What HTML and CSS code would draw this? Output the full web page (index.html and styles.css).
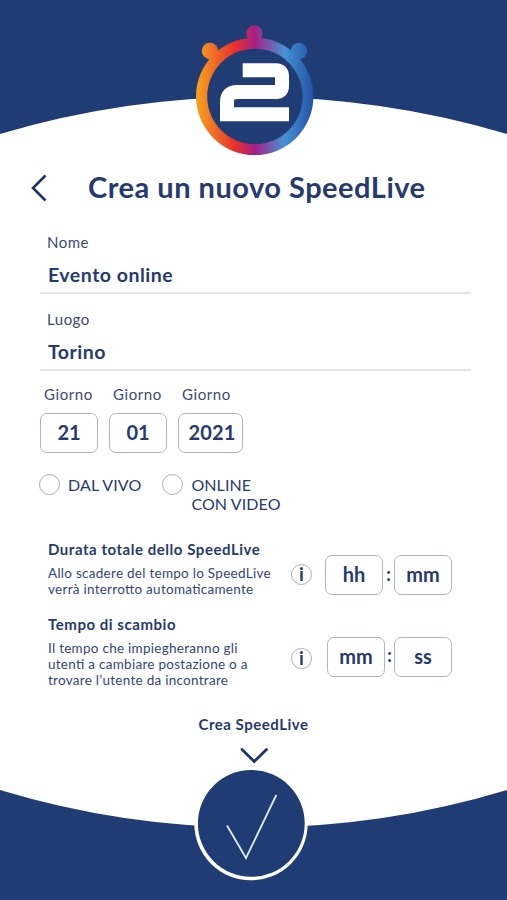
FILE: index.html
```html
<!DOCTYPE html>
<html lang="it">
<head>
<meta charset="utf-8">
<title>Crea un nuovo SpeedLive</title>
<meta name="viewport" content="width=device-width, initial-scale=1">
<link rel="stylesheet" href="styles.css">
</head>
<body>

<svg class="top" viewBox="0 0 507 160" width="507" height="160">
	<defs>
		<linearGradient id="ring" gradientUnits="userSpaceOnUse" x1="196" y1="0" x2="314" y2="0">
			<stop offset="0" stop-color="#f7a51b"/>
			<stop offset=".16" stop-color="#ee6b26"/>
			<stop offset=".33" stop-color="#e9302b"/>
			<stop offset=".5" stop-color="#a61f85"/>
			<stop offset=".75" stop-color="#4593d3"/>
			<stop offset="1" stop-color="#2250a3"/>
		</linearGradient>
	</defs>
	<path class="navy" d="M0 0H507V134A887 887 0 0 0 0 134Z"/>
	<g fill="url(#ring)">
		<circle cx="254.7" cy="96.4" r="58.7"/>
		<circle cx="254.5" cy="33.5" r="8.2"/>
		<circle cx="210" cy="51" r="8.2"/>
		<circle cx="299" cy="51" r="8.2"/>
		<path d="M250 36h9.500v6h-9.500zM207 57l7-6 7 6-7 8zM302 57l-7-6-7 6 7 8z"/>
	</g>
	<circle class="navy" cx="254.900" cy="96.400" r="47.700"/>
	<path class="mark" d="M242.700 70.300H276Q282 70.300 282 76.300V86Q282 92 276 92H237Q227 92 227 102V114.200H289"/>
</svg>

<form class="page">

<div class="title">
	<svg class="back" width="16" height="28" viewBox="0 0 16 28"><path d="M14.500 1.500L2 14L14.500 26.500"/></svg>
	<h1>Crea un nuovo SpeedLive</h1>
</div>

<label class="field">
	<span>Nome</span>
	<input type="text" value="Evento online">
</label>
<label class="field second">
	<span>Luogo</span>
	<input type="text" value="Torino">
</label>

<div class="date">
	<label><span>Giorno</span><input class="box" type="text" value="21"></label>
	<label><span>Giorno</span><input class="box" type="text" value="01"></label>
	<label><span>Giorno</span><input class="box year" type="text" value="2021"></label>
</div>

<div class="modes">
	<label><i class="radio"></i><span>DAL VIVO</span></label>
	<label><i class="radio"></i><span>ONLINE<br>CON VIDEO</span></label>
</div>

<div class="row total">
	<div class="text">
		<h2>Durata totale dello SpeedLive</h2>
		<p>Allo scadere del tempo lo SpeedLive<br>verrà interrotto automaticamente</p>
	</div>
	<b class="info">i</b>
	<div class="time"><span class="box">hh</span><b>:</b><span class="box">mm</span></div>
</div>

<div class="row swap">
	<div class="text">
		<h2>Tempo di scambio</h2>
		<p>Il tempo che impiegheranno gli<br>utenti a cambiare postazione o a<br>trovare l’utente da incontrare</p>
	</div>
	<b class="info">i</b>
	<div class="time"><span class="box">mm</span><b>:</b><span class="box">ss</span></div>
</div>

<div class="create">Crea SpeedLive</div>

</form>

<svg class="bottom" viewBox="0 740 507 160" width="507" height="160">
	<path class="navy" d="M0 790A875 875 0 0 0 507 790V900H0Z"/>
	<circle cx="251" cy="823.600" r="56.700" fill="#fff"/>
	<circle class="navy" cx="251.300" cy="823.400" r="53.400"/>
	<path class="check" d="M227 825.500L246 858L276.300 795"/>
	<path class="down" d="M242 749.500L254.200 761.500L266.500 749.500"/>
</svg>

</body>
</html>
```

FILE: styles.css
```css
* {box-sizing: border-box;}
body {margin: 0; width: 507px; height: 900px; overflow: hidden; background: #fff; color: #263a70; font-family: Lato, sans-serif; font-size: 15px; display: flex; flex-direction: column;}
svg {display: block; flex: none;}
h1, h2, p {margin: 0;}
input {font-family: inherit; color: inherit; background: none; outline: none;}

.navy {fill: #1f3d74;}
.mark {fill: none; stroke: #fff; stroke-width: 14;}
.back path {fill: none; stroke: #1f3568; stroke-width: 2.6;}
.check {fill: none; stroke: #dcebfa; stroke-width: 1.8;}
.down {fill: none; stroke: #1f3568; stroke-width: 2.8; stroke-linecap: round;}

.page {height: 580px; flex: none; display: flex; flex-direction: column;}

.title {height: 56px; padding-left: 31px; display: flex; align-items: center;}
h1 {margin-left: 41px; padding-bottom: 2px; font-size: 29px; line-height: 54px; letter-spacing: .5px; white-space: nowrap;}

.field {display: block; margin: 16px 36px 0 40px; height: 62px; border-bottom: 2px solid #e3e3e5;}
.field span, .date span {color: #3b4976;}
.field span {display: block; padding-left: 7px; line-height: 20px; letter-spacing: .5px;}
.field input {display: block; width: 100%; height: 26px; margin-top: 9px; padding: 0 0 0 8px; border: 0; font-size: 19.5px; font-weight: bold; letter-spacing: .5px;}
.second {margin-top: 15px;}

.date {display: flex; gap: 11px; margin: 12px 0 0 40px;}
.date span {display: block; padding-left: 4px; line-height: 22px; letter-spacing: .6px;}
.box {display: block; width: 58px; height: 40px; padding: 0; border: 1px solid #b1b4c6; border-radius: 7px; text-align: center; font-size: 20px; font-weight: bold; line-height: 36px;}
.date .box {margin-top: 8px; padding-bottom: 2px;}
.date .year {width: 65px; padding-left: 3px; letter-spacing: .2px;}

.modes {display: flex; gap: 21px; margin: 21px 0 0 39px; font-size: 16px; line-height: 19px; letter-spacing: .1px;}
.modes label {display: flex; gap: 8px;}
.radio {width: 21px; height: 21px; border: 1px solid #aaadb5; border-radius: 50%;}
.modes span {padding-top: 1px;}

.row {display: flex; align-items: flex-start; padding-left: 48px;}
.text {width: 243px;}
h2 {font-size: 15px; line-height: 20px; letter-spacing: .54px;}
p {margin-top: 6px; font-size: 13.5px; line-height: 16px; letter-spacing: .27px; font-feature-settings: "liga" 1; color: #35447a; white-space: nowrap;}
.info {width: 21px; height: 21px; border: 1px solid #aaadc0; border-radius: 50%; text-align: center; font-size: 19px; line-height: 18px;}
.time {display: flex; margin-left: 13px;}
.time b {width: 11px; text-align: center; font-size: 18px; line-height: 38px;}
.total {margin-top: 26px; height: 75px;}
.total .info {margin-top: 25px;}
.total .time {margin-top: 16px;}
.swap {height: 100px;}
.swap .info {margin-top: 34px;}
.swap .time {margin-top: 23px; margin-left: 15px;}
.swap .time b {width: 9px; line-height: 36px;}

.create {text-align: center; line-height: 20px; font-weight: bold; letter-spacing: .5px;}
```
